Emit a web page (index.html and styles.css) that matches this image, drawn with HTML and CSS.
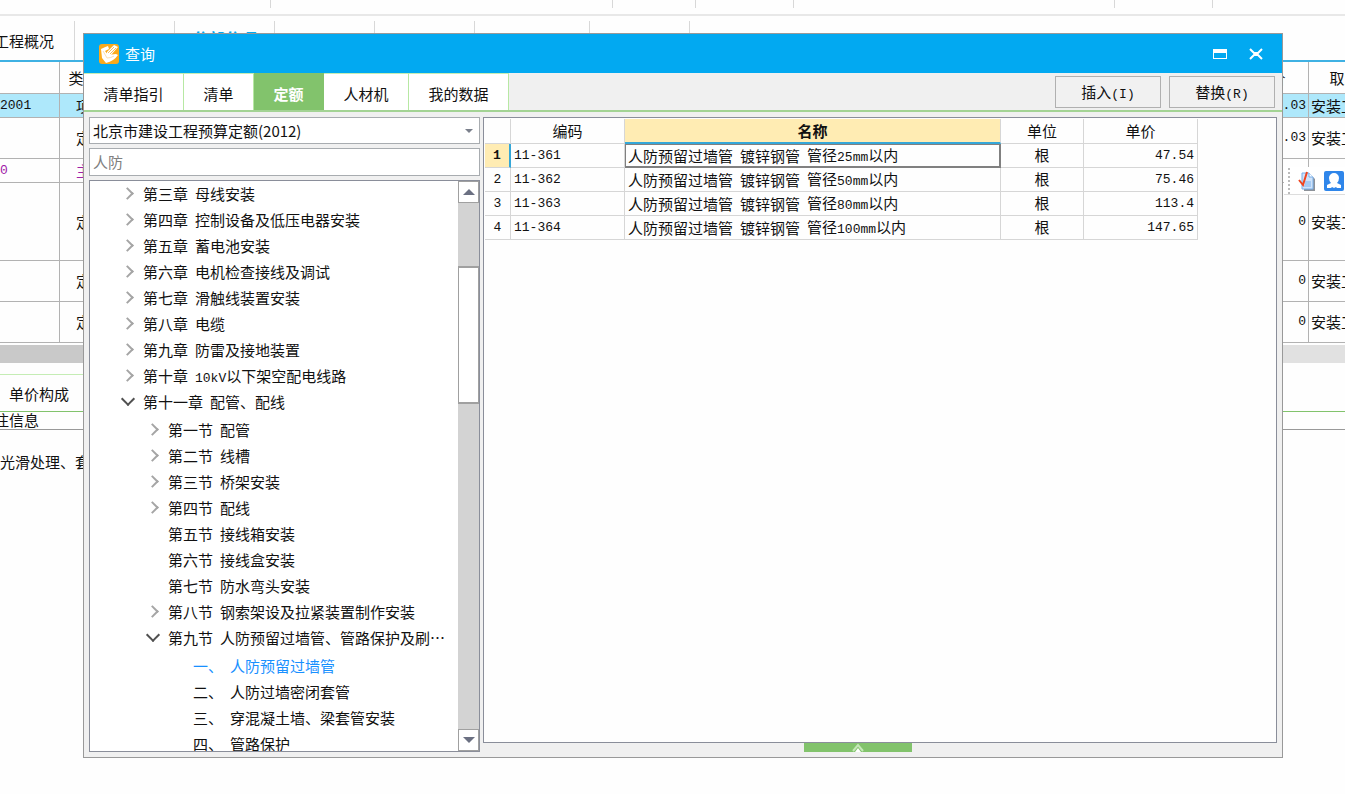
FILE: index.html
```html
<!DOCTYPE html>
<html lang="zh-CN">
<head>
<meta charset="utf-8">
<title>查询</title>
<link rel="stylesheet" href="styles.css">
</head>
<body>
<div class="workspace">
  <div class="ribbon"><i class="r1"></i><i class="r2"></i><i class="r3"></i><i class="r4"></i><i class="r5"></i><i class="r6"></i></div>
  <nav class="main-tabs">
    <a href="#" class="first"><span>工程概况</span></a>
    <a href="#" aria-label="取费设置"></a>
    <a href="#" class="current">分部分项</a>
    <a href="#" aria-label="措施项目"></a>
    <a href="#" aria-label="其他项目"></a>
    <a href="#" class="wide" aria-label="人材机汇总"></a>
    <a href="#" aria-label="费用汇总"></a>
  </nav>
  <div class="sheet-wrap">
    <table class="sheet">
      <colgroup><col class="s-code"><col class="s-type"><col><col class="s-price"><col class="s-major"></colgroup>
      <thead><tr><th></th><th>类别</th><th></th><th>单价</th><th>取费专业</th></tr></thead>
      <tbody>
        <tr class="short selected"><td class="num">2001</td><td class="mid">项</td><td></td><td class="num right">.03</td><td>安装工程</td></tr>
        <tr class="medium"><td></td><td class="mid">定</td><td></td><td class="num right">.03</td><td>安装工程</td></tr>
        <tr class="short main-material"><td class="num">0</td><td class="mid">主</td><td></td><td></td><td></td></tr>
        <tr class="tall"><td></td><td class="mid">定</td><td></td><td class="num right">0</td><td>安装工程</td></tr>
        <tr class="medium"><td></td><td class="mid">定</td><td></td><td class="num right">0</td><td>安装工程</td></tr>
        <tr class="medium"><td></td><td class="mid">定</td><td></td><td class="num right">0</td><td>安装工程</td></tr>
      </tbody>
    </table>
  </div>
  <div class="h-scroll"><div class="h-thumb"></div></div>
  <div class="sub-tabs"><a href="#">单价构成</a></div>
  <div class="note-head"><span>备注信息</span></div>
  <p class="note">光滑处理、套管</p>
</div>

<div class="float-tools">
  <i class="grip"></i>
  <button type="button" aria-label="检查"><svg width="18" height="20" viewBox="0 0 18 20"><path d="M6 4h7l4 4v12H6z" fill="#8d9299"/><path d="M4 2h7l4 4v12H4z" fill="#cfe3fa" stroke="#79aee8"/><path d="M11 2v4h4" fill="#fff" stroke="#79aee8"/><path d="M7 11h6M7 13h6M6 15h7" stroke="#7db2ee"/><path d="M1 9l4 5L9 1" fill="none" stroke="#f0441f" stroke-width="2"/></svg></button>
  <button type="button" aria-label="用户"><svg width="20" height="20" viewBox="0 0 20 20"><rect width="20" height="20" rx="2" fill="#2f86ea"/><path d="M10 2a5 5 0 0 0-5 5q0 3 2 5l-4 2v3h4l1-1 2 1 2-1 1 1h4v-3l-4-2q2-2 2-5a5 5 0 0 0-5-5" fill="#fff"/></svg></button>
</div>

<section class="dialog" role="dialog" aria-labelledby="dialog-title">
  <header class="titlebar">
    <svg width="20" height="20" viewBox="0 0 20 20"><rect width="20" height="20" rx="3" fill="#fbaa1c"/><path d="M2 5q4-2 7-3l1 3-4 2 3 4 8-1 2 1q-4 6-12 8L3 14z" fill="#fff"/><path d="M8 8l7-7 4 2-7 8-5 2z" fill="#fff"/><path d="M9 9l6-6M11 10l6-6" stroke="#f9bd5c"/><path d="M4 7l4 7q4 0 7-2" fill="none" stroke="#fbe0b4"/></svg>
    <h1 id="dialog-title">查询</h1>
    <button type="button" aria-label="最大化"><svg width="14" height="10" viewBox="0 0 14 10"><path d="M0 0h14v10H0zM1 4v5h12V4z" fill="#fff" fill-rule="evenodd"/></svg></button>
    <button type="button" aria-label="关闭"><svg width="14" height="12" viewBox="0 0 14 12"><path d="M1 1l4 4h4l4-4M1 11l4-4h4l4 4M5 6h4" fill="none" stroke="#fff" stroke-width="2"/></svg></button>
  </header>
  <div class="toolbar">
    <nav class="tabs">
      <button type="button" class="t4">清单指引</button><button type="button" class="t2">清单</button><button type="button" class="t2 active">定额</button><button type="button" class="t3">人材机</button><button type="button" class="t4">我的数据</button>
    </nav>
    <div class="actions">
      <button type="button">插入<span class="num">(I)</span></button>
      <button type="button">替换<span class="num">(R)</span></button>
    </div>
  </div>
  <div class="content">
    <aside class="browser">
      <div class="select-box">
        <select aria-label="定额库"><option>北京市建设工程预算定额(2012)</option></select>
        <svg width="8" height="4" viewBox="0 0 8 4"><path d="M0 0h8L4 4z" fill="#7b808c"/></svg>
      </div>
      <input class="search" type="text" value="人防" aria-label="搜索">
      <div class="tree-box">
        <ul class="tree">
          <li><a href="#"><i class="shut"></i><span>第三章</span><span>母线安装</span></a></li>
          <li><a href="#"><i class="shut"></i><span>第四章</span><span>控制设备及低压电器安装</span></a></li>
          <li><a href="#"><i class="shut"></i><span>第五章</span><span>蓄电池安装</span></a></li>
          <li><a href="#"><i class="shut"></i><span>第六章</span><span>电机检查接线及调试</span></a></li>
          <li><a href="#"><i class="shut"></i><span>第七章</span><span>滑触线装置安装</span></a></li>
          <li><a href="#"><i class="shut"></i><span>第八章</span><span>电缆</span></a></li>
          <li><a href="#"><i class="shut"></i><span>第九章</span><span>防雷及接地装置</span></a></li>
          <li><a href="#"><i class="shut"></i><span>第十章</span><span><span class="num">10kV</span>以下架空配电线路</span></a></li>
          <li><a href="#"><i class="open"></i><span>第十一章</span><span>配管、配线</span></a>
            <ul>
              <li><a href="#"><i class="shut"></i><span>第一节</span><span>配管</span></a></li>
              <li><a href="#"><i class="shut"></i><span>第二节</span><span>线槽</span></a></li>
              <li><a href="#"><i class="shut"></i><span>第三节</span><span>桥架安装</span></a></li>
              <li><a href="#"><i class="shut"></i><span>第四节</span><span>配线</span></a></li>
              <li><a href="#"><i></i><span>第五节</span><span>接线箱安装</span></a></li>
              <li><a href="#"><i></i><span>第六节</span><span>接线盒安装</span></a></li>
              <li><a href="#"><i></i><span>第七节</span><span>防水弯头安装</span></a></li>
              <li><a href="#"><i class="shut"></i><span>第八节</span><span>钢索架设及拉紧装置制作安装</span></a></li>
              <li><a href="#"><i class="open"></i><span>第九节</span><span>人防预留过墙管、管路保护及刷…</span></a>
                <ul>
                  <li><a href="#" class="picked"><i></i><span>一、</span><span>人防预留过墙管</span></a></li>
                  <li><a href="#"><i></i><span>二、</span><span>人防过墙密闭套管</span></a></li>
                  <li><a href="#"><i></i><span>三、</span><span>穿混凝土墙、梁套管安装</span></a></li>
                  <li><a href="#"><i></i><span>四、</span><span>管路保护</span></a></li>
                </ul>
              </li>
            </ul>
          </li>
        </ul>
        <div class="v-scroll">
          <button type="button" aria-label="向上滚动"><svg width="12" height="6" viewBox="0 0 12 6"><path d="M0 6h12L6 0z" fill="#6b7082"/></svg></button>
          <div class="v-track"><div class="v-thumb"></div></div>
          <button type="button" aria-label="向下滚动"><svg width="12" height="6" viewBox="0 0 12 6"><path d="M0 0h12L6 6z" fill="#6b7082"/></svg></button>
        </div>
      </div>
    </aside>
    <main class="results">
      <div class="grid-box">
        <table class="grid">
          <colgroup><col class="g-no"><col class="g-code"><col class="g-name"><col class="g-unit"><col class="g-price"></colgroup>
          <thead><tr><th></th><th>编码</th><th class="sorted">名称</th><th>单位</th><th>单价</th></tr></thead>
          <tbody>
            <tr class="current"><th class="num">1</th><td class="num">11-361</td><td class="focus"><div><span>人防预留过墙管</span><span>镀锌钢管</span><span>管径<span class="num">25mm</span>以内</span></div></td><td class="mid">根</td><td class="num right">47.54</td></tr>
            <tr><th class="num">2</th><td class="num">11-362</td><td><div><span>人防预留过墙管</span><span>镀锌钢管</span><span>管径<span class="num">50mm</span>以内</span></div></td><td class="mid">根</td><td class="num right">75.46</td></tr>
            <tr><th class="num">3</th><td class="num">11-363</td><td><div><span>人防预留过墙管</span><span>镀锌钢管</span><span>管径<span class="num">80mm</span>以内</span></div></td><td class="mid">根</td><td class="num right">113.4</td></tr>
            <tr><th class="num">4</th><td class="num">11-364</td><td><div><span>人防预留过墙管</span><span>镀锌钢管</span><span>管径<span class="num">100mm</span>以内</span></div></td><td class="mid">根</td><td class="num right">147.65</td></tr>
          </tbody>
        </table>
      </div>
      <div class="drawer"><button type="button" aria-label="展开"><svg width="12" height="9" viewBox="0 0 12 9"><path d="M1 8l5-6 5 6" fill="none" stroke="#c5e8b8" stroke-width="2"/><path d="M3 9l3-4 3 4z" fill="#fff"/></svg></button></div>
    </main>
  </div>
</section>
</body>
</html>
```
FILE: styles.css
```css
* { box-sizing: border-box; }
html, body { height: 100%; }
body {
  margin: 0;
  position: relative;
  overflow: hidden;
  background: #fefefe;
  color: #111;
  font: 15px/20px "Noto Sans CJK SC", sans-serif;
}
button, input, select { font: inherit; color: inherit; margin: 0; padding: 0; border: 0; border-radius: 0; background: none; }
a { color: inherit; text-decoration: none; }
table { border-collapse: separate; border-spacing: 0; table-layout: fixed; }
th, td { padding: 0; font-weight: 400; }
ul { list-style: none; margin: 0; padding: 0; }
svg { display: block; flex: none; }
.num { font-family: "Liberation Mono", monospace; font-size: 13px; line-height: 16px; }

/* Workspace behind the dialog */
.workspace { overflow: hidden; height: 100%; }
.ribbon { display: flex; height: 16px; border-bottom: 2px solid #e8e8e8; }
.ribbon i { height: 8px; border-right: 1px solid #d8d8d8; }
.r1 { width: 271px; } .r2 { width: 342px; } .r3 { width: 83px; }
.r4 { width: 98px; } .r5 { width: 321px; } .r6 { width: 98px; }
.main-tabs { display: flex; height: 46px; padding-top: 5px; border-bottom: 2px solid #3fb1e3; }
.main-tabs a { width: 100px; border-right: 1px solid #d8d8d8; text-align: center; line-height: 39px; white-space: nowrap; }
.main-tabs .first { width: 75px; text-align: left; }
.main-tabs .first span { display: inline-block; margin-left: -6px; }
.main-tabs .current { color: #02a9f1; font-weight: 700; font-size: 16px; line-height: 35px; }
.main-tabs .wide { width: 115px; }
.sheet-wrap { overflow: hidden; }
.sheet { width: calc(100% + 66px); }
.s-code { width: 60px; } .s-type { width: 48px; } .s-price { width: 76px; } .s-major { width: 102px; }
.sheet th, .sheet td { border-right: 1px solid #b2b2b2; border-bottom: 1px solid #b2b2b2; }
.sheet th { height: 32px; }
.sheet td { padding: 0 2px; }
.sheet td:first-child { padding: 0; }
.short { height: 24px; }
.medium { height: 41px; }
.tall { height: 78px; }
.selected { background: #aee8fb; }
.main-material { color: #a020a8; }
.sheet .mid, .grid .mid { text-align: center; }
.sheet .right, .grid .right { text-align: right; }
.h-scroll { margin-top: 2px; height: 18px; background: #e1e1e1; }
.h-thumb { width: 60%; height: 100%; background: #c9c9c9; }
.sub-tabs { display: flex; margin-top: 11px; height: 38px; border-bottom: 1px solid #82c36c; }
.sub-tabs a { width: 90px; padding-left: 9px; line-height: 38px; border-top: 1px solid #c5edb5; }
.note-head { height: 18px; line-height: 16px; border-bottom: 1px solid #999; overflow: hidden; }
.note-head span { margin-left: -21px; }
.note { margin: 22px 0 0; }

.float-tools { position: absolute; right: 0; top: 167px; width: 61px; height: 28px; padding-left: 4px; display: flex; gap: 8px; align-items: center; background: #fff; border-bottom: 1px solid #ddd; overflow: hidden; }
.grip { height: 26px; border-left: 2px dotted #bbb; }

/* Dialog */
.dialog { position: absolute; top: 33px; right: 62px; bottom: 36px; left: 83px; display: flex; flex-direction: column; background: #f0f0f0; border: 1px solid #999; }
.titlebar { display: flex; align-items: center; height: 39px; padding: 0 19px 0 15px; background: #02a9f1; color: #fff; }
.titlebar h1 { flex: 1; margin: 0 0 0 6px; font-size: 15px; line-height: 18px; font-weight: 400; }
.titlebar button + button { margin-left: 22px; }
.toolbar { display: flex; justify-content: space-between; height: 39px; border-bottom: 2px solid #a3d394; }
.tabs { display: flex; }
.tabs button { background: #fff; border-top: 1px solid #c5edb5; border-right: 1px solid #b7e8a3; padding-top: 4px; }
.tabs .t4 { width: 100px; } .tabs .t2 { width: 70px; } .tabs .t3 { width: 85px; }
.tabs .active { background: #82c36c; border-color: #82c36c; color: #fff; font-weight: 700; }
.actions { display: flex; gap: 8px; padding: 3px 7px 0 0; }
.actions button { width: 106px; height: 32px; border: 1px solid #b0b0b0; background: #f1f1f1; }
.content { flex: 1; min-height: 0; display: flex; gap: 3px; padding: 5px; }
.browser { width: 391px; display: flex; flex-direction: column; gap: 4px; }
.select-box { display: flex; align-items: center; height: 27px; padding-right: 6px; background: #fff; border: 1px solid #a8acb0; }
.select-box select { flex: 1; appearance: none; height: 24px; padding-left: 3px; outline: 0; }
.search { width: 100%; height: 28px; padding: 0 3px 2px; border: 1px solid #a8acb0; background: #fff; color: #808080; }
.tree-box { flex: 1; min-height: 0; display: flex; background: #fff; border: 1px solid #8a8e9a; }
.tree { flex: 1; min-width: 0; overflow: hidden; padding: 0 0 0 33px; }
.tree ul { padding: 2px 0 0 25px; }
.tree a { display: flex; align-items: center; gap: 7px; height: 26px; white-space: nowrap; }
.tree i { flex: none; width: 13px; height: 14px; padding-bottom: 2px; display: flex; align-items: center; }
.tree i::before { content: ""; }
.tree .shut::before { width: 7px; height: 7px; border: solid #a5a5a5; border-width: 2px 2px 0 0; transform: rotate(45deg); }
.tree .open::before { width: 8px; height: 8px; margin-bottom: 4px; border: solid #505050; border-width: 0 2px 2px 0; transform: rotate(45deg); }
.tree .picked { color: #1890ff; }
.v-scroll { width: 21px; display: flex; flex-direction: column; background: #d3d3d3; }
.v-scroll button { height: 22px; display: flex; align-items: center; justify-content: center; background: #fff; border: 1px solid #a0a0a0; }
.v-track { flex: 1; padding-top: 63px; }
.v-thumb { height: 138px; background: #fff; border: 1px solid #a0a0a0; border-width: 2px 1px; }
.results { flex: 1; min-width: 0; display: flex; flex-direction: column; }
.grid-box { flex: 1; min-height: 0; background: #fefefe; border: 1px solid #8a8e9a; padding: 1px; overflow: hidden; }
.grid { width: 713px; line-height: 18px; }
.g-no { width: 26px; } .g-code { width: 114px; } .g-name { width: 376px; } .g-unit { width: 83px; } .g-price { width: 114px; }
.grid th, .grid td { height: 24px; border-right: 1px solid #d6d6d6; border-bottom: 1px solid #d6d6d6; }
.grid thead th { height: 25px; }
.grid td { padding: 0 3px; }
.grid .mid { padding-bottom: 2px; }
.grid td div { display: flex; align-items: center; gap: 7px; height: 18px; white-space: nowrap; }
.grid .sorted { background: #ffecb3; border-bottom: 2px solid #35a7d8; font-weight: 700; }
.grid .current th { background: #ffecb3; border-right: 2px solid #35a7d8; font-weight: 700; }
.grid .focus { border: 1px solid #808080; border-width: 1px 2px 2px 1px; padding-left: 2px; }
.drawer { display: flex; justify-content: center; height: 9px; padding-right: 44px; }
.drawer button { width: 108px; display: flex; justify-content: center; background: #82c36c; }
```
